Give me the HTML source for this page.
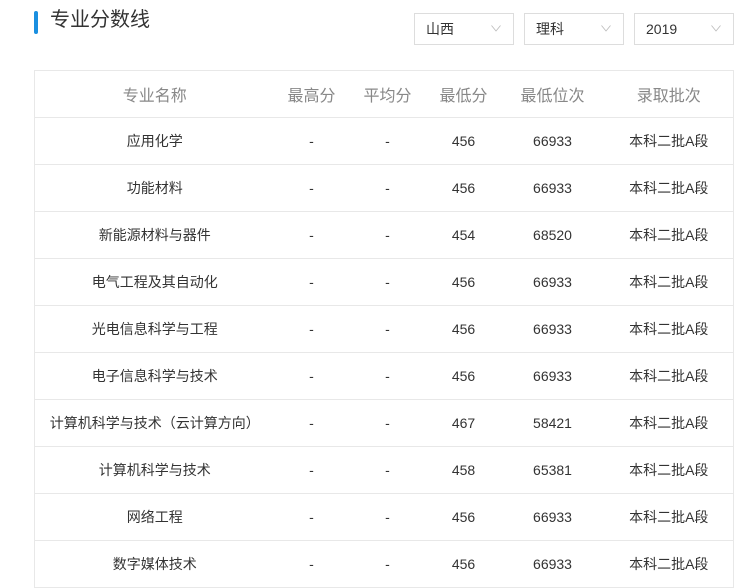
<!DOCTYPE html>
<html><head><meta charset="utf-8"><style>
*{margin:0;padding:0;box-sizing:border-box}
body{width:746px;height:584px;overflow:hidden;background:#fff;font-family:"Liberation Sans","Noto Sans CJK SC",sans-serif;color:#333;position:relative}
.bar{position:absolute;left:34px;top:11px;width:4px;height:23px;background:#1a8fe0;border-radius:2px}
.title{position:absolute;left:50px;top:7px;font-size:20px;color:#333;line-height:26px}
.sel{position:absolute;top:13px;width:100px;height:32px;border:1px solid #ddd;font-size:14px;line-height:30px;padding-left:11px;color:#333}
.sel svg{position:absolute;right:12px;top:11px}
table{position:absolute;left:34px;top:70px;width:700px;border-collapse:collapse;border:1px solid #e8e8e8;border-bottom:none}
td,th{height:47px;border-bottom:1px solid #e8e8e8;text-align:center;font-size:14px;font-weight:normal;padding:0}
th{font-size:16px;color:#888;height:47px}
</style></head><body>
<div class="bar"></div><div class="title">专业分数线</div>
<div class="sel" style="left:414px">山西<svg width="10" height="7"><path d="M0.5 0.5L5 6L9.5 0.5" fill="none" stroke="#bbb" stroke-width="0.8"/></svg></div>
<div class="sel" style="left:524px">理科<svg width="10" height="7"><path d="M0.5 0.5L5 6L9.5 0.5" fill="none" stroke="#bbb" stroke-width="0.8"/></svg></div>
<div class="sel" style="left:634px">2019<svg width="10" height="7"><path d="M0.5 0.5L5 6L9.5 0.5" fill="none" stroke="#bbb" stroke-width="0.8"/></svg></div>
<table>
<colgroup><col style="width:240px"><col style="width:74px"><col style="width:78px"><col style="width:74px"><col style="width:104px"><col></colgroup>
<tr><th>专业名称</th><th>最高分</th><th>平均分</th><th>最低分</th><th>最低位次</th><th>录取批次</th></tr>
<tr><td>应用化学</td><td>-</td><td>-</td><td>456</td><td>66933</td><td>本科二批A段</td></tr>
<tr><td>功能材料</td><td>-</td><td>-</td><td>456</td><td>66933</td><td>本科二批A段</td></tr>
<tr><td>新能源材料与器件</td><td>-</td><td>-</td><td>454</td><td>68520</td><td>本科二批A段</td></tr>
<tr><td>电气工程及其自动化</td><td>-</td><td>-</td><td>456</td><td>66933</td><td>本科二批A段</td></tr>
<tr><td>光电信息科学与工程</td><td>-</td><td>-</td><td>456</td><td>66933</td><td>本科二批A段</td></tr>
<tr><td>电子信息科学与技术</td><td>-</td><td>-</td><td>456</td><td>66933</td><td>本科二批A段</td></tr>
<tr><td>计算机科学与技术（云计算方向）</td><td>-</td><td>-</td><td>467</td><td>58421</td><td>本科二批A段</td></tr>
<tr><td>计算机科学与技术</td><td>-</td><td>-</td><td>458</td><td>65381</td><td>本科二批A段</td></tr>
<tr><td>网络工程</td><td>-</td><td>-</td><td>456</td><td>66933</td><td>本科二批A段</td></tr>
<tr><td>数字媒体技术</td><td>-</td><td>-</td><td>456</td><td>66933</td><td>本科二批A段</td></tr>
</table>
</body></html>
